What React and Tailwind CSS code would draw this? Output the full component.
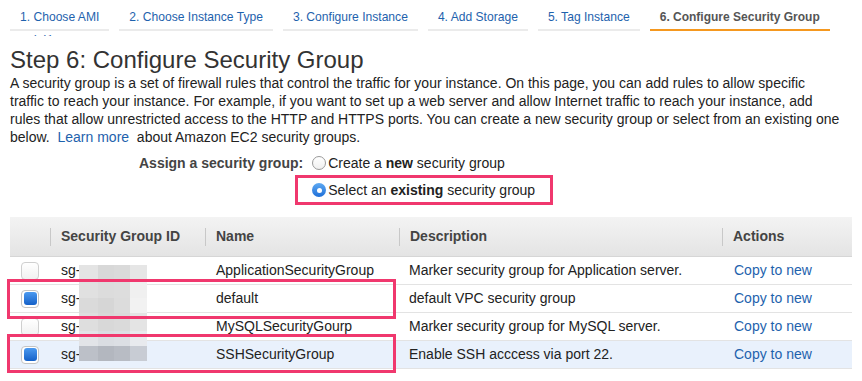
const tabs = [
  { label: "1. Choose AMI" },
  { label: "2. Choose Instance Type" },
  { label: "3. Configure Instance" },
  { label: "4. Add Storage" },
  { label: "5. Tag Instance" },
  { label: "6. Configure Security Group", active: true },
];

const groups = [
  { name: "ApplicationSecurityGroup", desc: "Marker security group for Application server.", checked: false },
  { name: "default", desc: "default VPC security group", checked: true },
  { name: "MySQLSecurityGourp", desc: "Marker security group for MySQL server.", checked: false },
  { name: "SSHSecurityGroup", desc: "Enable SSH acccess via port 22.", checked: true, selected: true },
];

// pixelated id redaction, row by row
const blur = [
  ["#e4e4e4", "#d8d8d8", "#dadada", "#e6e6e6"],
  ["#e0e0e0", "#dcdcdc", "#dddddd", "#f0f0f0"],
  ["#dadada", "#d6d6d6", "#dcdcdc", "#f2f2f2"],
  ["#dedede", "#d8d8d8", "#dadada", "#e4e4e4"],
  ["#e2e4e8", "#dadde2", "#dcdfe4", "#e8eaee"],
  ["#bcc0c8", "#b3b7bf", "#b8bcc4", "#c8ccd4"],
];

const cols = "grid grid-cols-[40px_155px_194px_323px_130px]";

function Checkbox({ checked }) {
  if (checked) {
    return (
      <span className="flex h-[18px] w-[18px] items-center justify-center rounded-[4px] border border-[#c4c4c4] bg-white">
        <span className="h-[13px] w-[13px] rounded-[3px] bg-gradient-to-b from-[#4b9af0] to-[#1460c8]" />
      </span>
    );
  }
  return (
    <span className="block h-[18px] w-[18px] rounded-[4px] border border-[#cfcfcf] bg-gradient-to-b from-white to-[#f1f1f1]" />
  );
}

function Radio({ checked }) {
  if (checked) {
    return (
      <span className="flex h-[14px] w-[14px] items-center justify-center rounded-full bg-gradient-to-b from-[#5ea9f2] to-[#1d6fd8]">
        <span className="h-[5px] w-[5px] rounded-full bg-white" />
      </span>
    );
  }
  return <span className="block h-[14px] w-[14px] rounded-full border border-[#9a9a9a] bg-gradient-to-b from-white to-[#f0f0f0]" />;
}

function HeaderCell({ children }) {
  return (
    <div className="flex items-center">
      <span className="h-[18px] w-px bg-[#c8c8c8]" />
      <span className="ml-[10px]">{children}</span>
    </div>
  );
}

export default function App() {
  return (
    <div className="relative h-[381px] w-[862px] overflow-hidden bg-white font-['Liberation_Sans',Arial,sans-serif] text-[#222]">
      <div className="flex gap-[10px] pl-[10px]">
        {tabs.map((tab) => (
          <div
            key={tab.label}
            className={`whitespace-nowrap px-[10px] pt-[10px] pb-[5px] leading-[14px] border-b-2 ${
              tab.active ? "border-[#f5981f] text-[12px] font-bold text-[#555]" : "border-[#ebebeb] text-[12.1px] text-[#1e62ad]"
            }`}
          >
            {tab.label}
          </div>
        ))}
      </div>
      <div className="mt-[4px] h-[1px] overflow-hidden pl-[30px] text-[12px] leading-[14px] text-[#1e62ad]">
        <div className="-mt-[3px]">7. Review</div>
      </div>

      <div className="px-[10px]">
        <h1 className="mt-[10px] text-[24px] leading-[28px] text-[#333]">Step 6: Configure Security Group</h1>
        <p className="whitespace-nowrap text-[14px] leading-[18px] text-[#222]">
          <span className="block">
            A security group is a set of firewall rules that control the traffic for your instance. On this page, you can add rules to allow specific
          </span>
          <span className="block">
            traffic to reach your instance. For example, if you want to set up a web server and allow Internet traffic to reach your instance, add
          </span>
          <span className="block">
            rules that allow unrestricted access to the HTTP and HTTPS ports. You can create a new security group or select from an existing one
          </span>
          <span className="block">
            below.&nbsp; <span className="text-[#1e62ad]">Learn more</span>&nbsp; about Amazon EC2 security groups.
          </span>
        </p>
      </div>

      <div className="mt-[8px] flex pl-[139px] text-[14px] leading-[18px]">
        <div className="font-bold text-[#444]">Assign a security group:</div>
        <div className="ml-[9px] flex flex-col gap-[9px]">
          <label className="flex items-center gap-[2px]">
            <Radio />
            <span>
              Create a <b>new</b> security group
            </span>
          </label>
          <label className="relative flex items-center gap-[2px]">
            <Radio checked />
            <span>
              Select an <b>existing</b> security group
            </span>
            <span className="absolute left-[-17px] right-[-18px] top-[-6px] bottom-[-6px] border-[3px] border-[#f0386e]" />
          </label>
        </div>
      </div>

      <div className="relative mx-[10px] mt-[18px] text-[14px]">
        <div className={`${cols} h-[40px] border-b border-[#d6d6d6] bg-gradient-to-b from-[#f3f3f3] to-[#e4e4e4] font-bold text-[#444]`}>
          <div />
          <HeaderCell>Security Group ID</HeaderCell>
          <HeaderCell>Name</HeaderCell>
          <HeaderCell>Description</HeaderCell>
          <HeaderCell>Actions</HeaderCell>
        </div>
        {groups.map((g) => (
          <div
            key={g.name}
            className={`${cols} h-[28px] items-center border-b border-[#e3e3e3] ${g.selected ? "bg-[#e9f1fc]" : "bg-white"}`}
          >
            <div className="pl-[11px]">
              <Checkbox checked={g.checked} />
            </div>
            <div className="pl-[11px]">sg-</div>
            <div className="pl-[11px]">{g.name}</div>
            <div className="pl-[10px] whitespace-nowrap">{g.desc}</div>
            <div className="pl-[12px] text-[#1e62ad]">Copy to new</div>
          </div>
        ))}

        <div className="absolute left-[69px] top-[48px] grid grid-cols-[19px_16px_16px_17px] grid-rows-[16px_17px_15px_18px_15px_15px]">
          {blur.flat().map((c, i) => (
            <span key={i} style={{ backgroundColor: c }} />
          ))}
        </div>

        <span className="absolute left-[-3px] top-[62px] h-[40px] w-[389px] border-[3px] border-[#f0386e]" />
        <span className="absolute left-[-3px] top-[117px] h-[39px] w-[389px] border-[3px] border-[#f0386e]" />
      </div>
    </div>
  );
}
